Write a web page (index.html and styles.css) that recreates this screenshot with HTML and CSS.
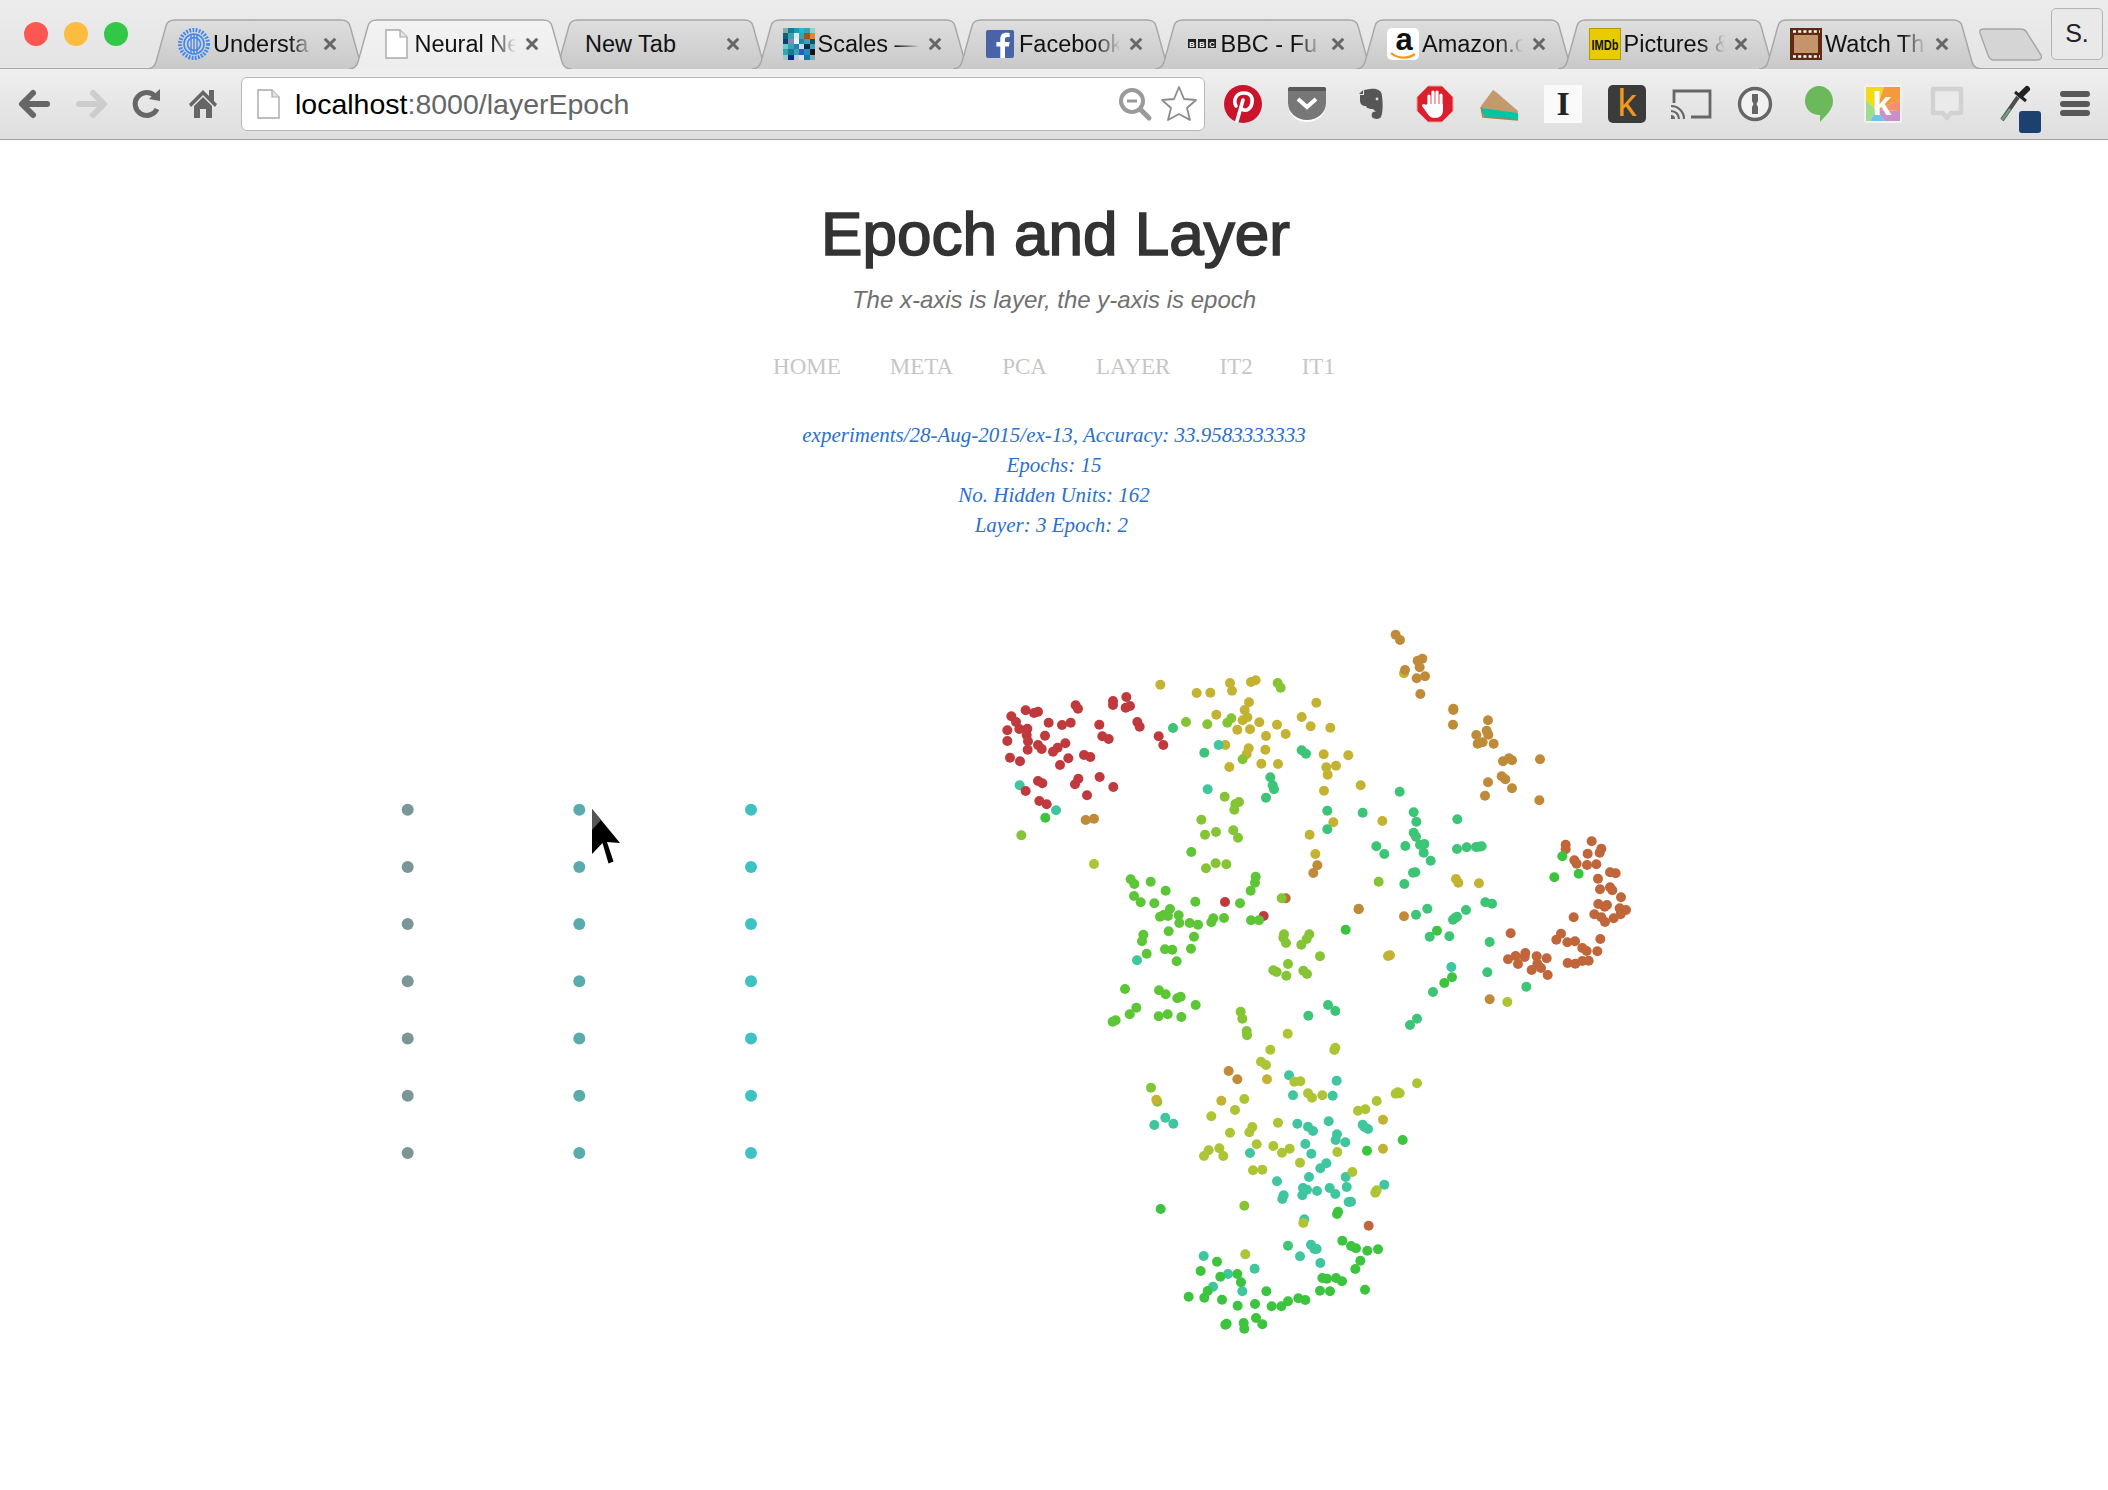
FILE: index.html
```html
<!DOCTYPE html>
<html lang="en">
<head>
    <meta charset="UTF-8">
    <title>Neural Network Visualization</title>
    <link rel="stylesheet" href="styles.css">
</head>
<body>
    <svg class="svg-defs" width="0" height="0">
        <defs>
            <linearGradient id="tabGrad" x1="0" y1="0" x2="0" y2="1">
                <stop offset="0" stop-color="#dedede"/>
                <stop offset="1" stop-color="#c9c9c9"/>
            </linearGradient>
            <linearGradient id="activeGrad" x1="0" y1="0" x2="0" y2="1">
                <stop offset="0" stop-color="#f3f3f3"/>
                <stop offset="1" stop-color="#ededed"/>
            </linearGradient>
            <symbol id="tab-shape" viewBox="0 0 223 50">
                <path stroke="#a6a6a6" stroke-width="1.4" d="M0 50C6 50 8 46 9 43L19 7C20 3 23 1 28 1H194C199 1 202 3 203 7L213 43C214 46 217 50 223 50"/>
            </symbol>
            <symbol id="page" viewBox="0 0 32 32">
                <path fill="#fff" stroke="#a9a9a9" stroke-width="1.4" d="M6 2H20L27 9V30H6Z"/>
                <path fill="#e4e4e4" stroke="#a9a9a9" stroke-width="1.2" d="M20 2V9H27"/>
            </symbol>
            <symbol id="close" viewBox="0 0 16 16">
                <path stroke="#666" stroke-width="3.4" d="M2 2L14 14M14 2L2 14"/>
            </symbol>
        </defs>
    </svg>

    <div class="browser">
        <div class="tabstrip">
            <div class="lights">
                <span class="light light-red"></span>
                <span class="light light-yellow"></span>
                <span class="light light-green"></span>
            </div>
            <div class="tab">
                <svg class="tab-shape"><use href="#tab-shape" fill="url(#tabGrad)"/></svg>
                <svg class="favicon" viewBox="0 0 32 32">
                    <circle cx="16" cy="16" r="14" fill="none" stroke="#3f86ef" stroke-width="4" stroke-dasharray="1.8 1.4"/>
                    <circle cx="16" cy="16" r="10" fill="none" stroke="#3f86ef" stroke-width="1.6"/>
                    <circle cx="16" cy="16" r="6.5" fill="none" stroke="#3f86ef" stroke-width="1.6"/>
                    <path stroke="#3f86ef" stroke-width="1.4" d="M13 7V25M16 6V26M19 7V25"/>
                </svg>
                <span class="tab-title">Understa</span>
                <svg class="tab-close"><use href="#close"/></svg>
            </div>
            <div class="tab tab-active">
                <svg class="tab-shape"><use href="#tab-shape" fill="url(#activeGrad)"/></svg>
                <svg class="favicon"><use href="#page"/></svg>
                <span class="tab-title">Neural Ne</span>
                <svg class="tab-close"><use href="#close"/></svg>
            </div>
            <div class="tab">
                <svg class="tab-shape"><use href="#tab-shape" fill="url(#tabGrad)"/></svg>
                <span class="tab-title no-icon">New Tab</span>
                <svg class="tab-close"><use href="#close"/></svg>
            </div>
            <div class="tab">
                <svg class="tab-shape"><use href="#tab-shape" fill="url(#tabGrad)"/></svg>
                <svg class="favicon" viewBox="0 0 6 6" shape-rendering="crispEdges">
                    <rect width="6" height="6" fill="#3aa3b0"/>
                    <rect x="0" width="1" height="1" fill="#8aa"/><rect x="1" width="1" height="1" fill="#147a9c"/><rect x="2" width="1" height="1" fill="#1f9ab5"/><rect x="3" width="1" height="1" fill="#20b8d0"/><rect x="5" width="1" height="1" fill="#9cc"/>
                    <rect y="1" width="1" height="1" fill="#0d5f7a"/><rect x="2" y="1" width="1" height="1" fill="#dfe8e8"/><rect x="4" y="1" width="1" height="1" fill="#a5541f"/><rect x="5" y="1" width="1" height="1" fill="#e08a2a"/>
                    <rect y="2" width="1" height="1" fill="#0c3f70"/><rect x="1" y="2" width="1" height="1" fill="#88b"/><rect x="2" y="2" width="1" height="1" fill="#eef"/><rect x="3" y="2" width="1" height="1" fill="#1c8aa0"/><rect x="5" y="2" width="1" height="1" fill="#14506a"/>
                    <rect y="3" width="1" height="1" fill="#6cc"/><rect x="2" y="3" width="1" height="1" fill="#2a80b0"/><rect x="3" y="3" width="1" height="1" fill="#bde"/><rect x="4" y="3" width="1" height="1" fill="#0f2a50"/>
                    <rect x="1" y="4" width="1" height="1" fill="#147a9c"/><rect x="3" y="4" width="1" height="1" fill="#2a5fc0"/><rect x="4" y="4" width="1" height="1" fill="#1a8fc0"/><rect x="5" y="4" width="1" height="1" fill="#111"/>
                    <rect y="5" width="1" height="1" fill="#9cc"/><rect x="1" y="5" width="1" height="1" fill="#0c2a80"/><rect x="2" y="5" width="1" height="1" fill="#bcd"/><rect x="3" y="5" width="1" height="1" fill="#dde"/><rect x="4" y="5" width="1" height="1" fill="#147a9c"/><rect x="5" y="5" width="1" height="1" fill="#7ab"/>
                </svg>
                <span class="tab-title">Scales —</span>
                <svg class="tab-close"><use href="#close"/></svg>
            </div>
            <div class="tab">
                <svg class="tab-shape"><use href="#tab-shape" fill="url(#tabGrad)"/></svg>
                <svg class="favicon" viewBox="0 0 32 32">
                    <rect x="2" y="2" width="28" height="28" rx="2" fill="#4a62a8"/>
                    <path fill="#fff" d="M21 30V18.500H25L25.600 14H21V11.200C21 9.800 21.500 9 23.300 9H25.700V5C25.200 4.900 23.800 4.800 22.200 4.800C18.700 4.800 16.300 6.900 16.300 10.700V14H12.400V18.500H16.300V30Z"/>
                </svg>
                <span class="tab-title">Facebook</span>
                <svg class="tab-close"><use href="#close"/></svg>
            </div>
            <div class="tab">
                <svg class="tab-shape"><use href="#tab-shape" fill="url(#tabGrad)"/></svg>
                <svg class="favicon" viewBox="0 0 32 32">
                    <rect x="2" y="11" width="8" height="9" fill="#222"/>
                    <rect x="12" y="11" width="8" height="9" fill="#222"/>
                    <rect x="22" y="11" width="8" height="9" fill="#222"/>
                    <text class="bbc-text" x="6" y="18.500">B</text>
                    <text class="bbc-text" x="16" y="18.500">B</text>
                    <text class="bbc-text" x="26" y="18.500">C</text>
                </svg>
                <span class="tab-title">BBC - Fu</span>
                <svg class="tab-close"><use href="#close"/></svg>
            </div>
            <div class="tab">
                <svg class="tab-shape"><use href="#tab-shape" fill="url(#tabGrad)"/></svg>
                <svg class="favicon" viewBox="0 0 32 32">
                    <rect x="0" y="0" width="32" height="32" rx="5" fill="#fff"/>
                    <text class="amazon-text" x="17" y="22">a</text>
                    <path fill="none" stroke="#f29a18" stroke-width="2.200" d="M4 25C11 31 21 31 28 26"/>
                </svg>
                <span class="tab-title">Amazon.c</span>
                <svg class="tab-close"><use href="#close"/></svg>
            </div>
            <div class="tab">
                <svg class="tab-shape"><use href="#tab-shape" fill="url(#tabGrad)"/></svg>
                <svg class="favicon" viewBox="0 0 32 32">
                    <rect x="0.500" y="0.500" width="31" height="31" fill="#e8cc00" stroke="#b49a00"/>
                    <text class="imdb-text" x="16" y="22" textLength="27" lengthAdjust="spacingAndGlyphs">IMDb</text>
                </svg>
                <span class="tab-title">Pictures &amp;</span>
                <svg class="tab-close"><use href="#close"/></svg>
            </div>
            <div class="tab">
                <svg class="tab-shape"><use href="#tab-shape" fill="url(#tabGrad)"/></svg>
                <svg class="favicon" viewBox="0 0 32 32">
                    <rect width="32" height="32" fill="#5e2a12"/>
                    <rect x="4" y="7" width="24" height="18" fill="#c4946a"/>
                    <path stroke="#fff" stroke-width="2.400" stroke-dasharray="3 2.200" d="M3 3.500H30M3 28.500H30"/>
                </svg>
                <span class="tab-title">Watch Th</span>
                <svg class="tab-close"><use href="#close"/></svg>
            </div>
            <svg class="newtab" viewBox="0 0 64 33">
                <path fill="#d5d5d5" stroke="#a6a6a6" stroke-width="1.400" d="M5 1H41C45 1 47 2 48 5L62 27C63 30 62 32 58 32H15C12 32 10 30 9 27L1 5C0 2 2 1 5 1Z"/>
            </svg>
            <div class="profile">S.</div>
        </div>

        <div class="toolbar">
            <div class="nav-btn">
                <svg viewBox="0 0 44 44"><path class="nav-arrow" d="M34 22H10M20 11L9 22L20 33"/></svg>
            </div>
            <div class="nav-btn">
                <svg viewBox="0 0 44 44"><path class="nav-arrow nav-disabled" d="M10 22H34M24 11L35 22L24 33"/></svg>
            </div>
            <div class="nav-btn">
                <svg viewBox="0 0 44 44">
                    <path class="nav-reload" d="M30 14A11.500 11.500 0 1 0 32 27"/>
                    <path fill="#666" d="M24 17L35 7V19Z"/>
                </svg>
            </div>
            <div class="nav-btn">
                <svg viewBox="0 0 44 44">
                    <path fill="#666" d="M22 8L28 14V8H33V19L36 22L34 25L22 13L10 25L8 22Z"/>
                    <path fill="#666" d="M13 24L22 15L31 24V36H25V27H19V36H13Z"/>
                </svg>
            </div>
            <div class="address">
                <svg class="address-page"><use href="#page"/></svg>
                <div class="url"><span class="url-host">localhost</span>:8000/layerEpoch</div>
                <svg class="address-icon" viewBox="0 0 44 44">
                    <circle cx="19" cy="19" r="11" fill="none" stroke="#9a9a9a" stroke-width="4"/>
                    <path stroke="#9a9a9a" stroke-width="3" d="M14 19H24"/>
                    <path stroke="#9a9a9a" stroke-width="5" stroke-linecap="round" d="M28 28L36 36"/>
                </svg>
                <svg class="address-icon" viewBox="0 0 44 44">
                    <path fill="#fff" stroke="#8c8c8c" stroke-width="1.800" stroke-linejoin="round" d="M22 5L27 17L39 18L30 26L33 38L22 32L11 38L14 26L5 18L17 17Z"/>
                </svg>
            </div>
            <div class="extensions">
                <div class="ext">
                    <svg viewBox="0 0 44 44">
                        <circle cx="22" cy="22" r="19" fill="#c9142c"/>
                        <path fill="none" stroke="#fff" stroke-width="3.600" stroke-linecap="round" d="M15 24C12 18 15 11 23 11C30 11 32 16 31 21C30 27 25 30 21 27M22 18L16 39"/>
                    </svg>
                </div>
                <div class="ext">
                    <svg viewBox="0 0 44 44">
                        <path fill="#fff" d="M3 8H41V22C41 33 32 40 22 40S3 33 3 22Z"/>
                        <path fill="#777" d="M3 7C3 6 4 5 5 5H39C40 5 41 6 41 7V21C41 31 32 38 22 38S3 31 3 21Z"/>
                        <path fill="#585858" d="M3 7C3 6 4 5 5 5H39C40 5 41 6 41 7V9H3Z"/>
                        <path fill="none" stroke="#fff" stroke-width="4" d="M13 17L22 25L31 17"/>
                    </svg>
                </div>
                <div class="ext">
                    <svg viewBox="0 0 44 44">
                        <path fill="#565656" d="M15 8L21 7C27 6 33 8 33 14C34 22 34 30 32 35C30 38 24 37 23 35C22 31 24 29 27 30L24 27C21 27 18 27 17 24C13 24 11 22 11 18V13H15Z"/>
                        <path fill="#565656" d="M10 12L14 8V12Z"/>
                        <circle cx="28" cy="17" r="1.400" fill="#ddd"/>
                    </svg>
                </div>
                <div class="ext">
                    <svg viewBox="0 0 44 44">
                        <path fill="#dd1f2b" stroke="#e9a6a6" stroke-width="1" d="M15 4H29L40 15V29L29 40H15L4 29V15Z"/>
                        <path fill="none" stroke="#fff" stroke-width="3.200" stroke-linecap="round" d="M16 14V25M20 10V24M24 10V24M28 13V25"/>
                        <path fill="#fff" d="M14 22H30V28C30 33 27 36 22 36C18 36 16 34 14 31L9 24C9 22 11 21 13 23Z"/>
                    </svg>
                </div>
                <div class="ext">
                    <svg viewBox="0 0 44 44">
                        <path fill="#c49a6c" d="M4 24L16 8L19 10L41 29L40 32L5 28Z"/>
                        <path fill="#00c5a2" d="M4 26L41 31V38L7 35Z"/>
                        <path fill="none" stroke="#a98156" stroke-width="1.600" d="M4 25L6 35L41 38"/>
                    </svg>
                </div>
                <div class="ext">
                    <svg viewBox="0 0 44 44">
                        <rect x="3" y="3" width="38" height="38" fill="#fafafa"/>
                        <text class="ext-i" x="22" y="33">I</text>
                    </svg>
                </div>
                <div class="ext">
                    <svg viewBox="0 0 44 44">
                        <rect x="3" y="3" width="38" height="38" rx="5" fill="#3b3b3b"/>
                        <text class="ext-k" x="22" y="34">k</text>
                    </svg>
                </div>
                <div class="ext">
                    <svg viewBox="0 0 44 44">
                        <path fill="none" stroke="#666" stroke-width="2.800" d="M5 21V9H41V35H22"/>
                        <path fill="none" stroke="#666" stroke-width="2.200" d="M2 24A13 13 0 0 1 15 37M2 29A8 8 0 0 1 10 37"/>
                        <path fill="#666" d="M2 33A4 4 0 0 1 6 37H2Z"/>
                    </svg>
                </div>
                <div class="ext">
                    <svg viewBox="0 0 44 44">
                        <circle cx="22" cy="22" r="15.500" fill="#f2f2f2" stroke="#666" stroke-width="3.400"/>
                        <path fill="#666" d="M19 12H25V19L23.500 22L25 25V32H19V25L20.500 22L19 19Z"/>
                    </svg>
                </div>
                <div class="ext">
                    <svg viewBox="0 0 44 44">
                        <path fill="#6cb95c" d="M22 4C30 4 36 11 36 19C36 28 29 33 23 40V33C14 33 8 27 8 19C8 11 14 4 22 4Z"/>
                    </svg>
                </div>
                <div class="ext">
                    <svg viewBox="0 0 44 44">
                        <rect x="3" y="3" width="38" height="38" rx="3" fill="#f2f2f2"/>
                        <path fill="#f4da10" d="M5 5H23L15 28L5 18Z"/>
                        <path fill="#f49a3c" d="M23 5H39V18L15 28Z"/>
                        <path fill="#f48f72" d="M39 18V29L15 28Z"/>
                        <path fill="#c98fc9" d="M39 29V39H24L15 28Z"/>
                        <path fill="#6dc3e8" d="M24 39H9L15 28Z"/>
                        <path fill="#9fdc8c" d="M9 39H5V18L15 28Z"/>
                        <text class="ext-kato" x="21" y="33">k</text>
                    </svg>
                </div>
                <div class="ext">
                    <svg viewBox="0 0 44 44">
                        <path fill="#eaeaea" stroke="#d2d2d2" stroke-width="4.500" stroke-linejoin="round" d="M8 7H36V31H26L22 36L18 31H8Z"/>
                    </svg>
                </div>
                <div class="ext">
                    <svg class="dropper" viewBox="0 0 44 44">
                        <path stroke="#4f4f4f" stroke-width="4" d="M13 38L29 15"/>
                        <path stroke="#6fa47e" stroke-width="2.400" d="M13 38L21 27"/>
                        <path stroke="#222" stroke-width="6" stroke-linecap="round" d="M32 13L38 7"/>
                        <path stroke="#222" stroke-width="3" d="M26 10L37 19"/>
                        <rect x="30" y="29" width="22" height="22" rx="3" fill="#1c416f"/>
                    </svg>
                </div>
                <div class="ext">
                    <svg viewBox="0 0 44 44">
                        <path stroke="#585858" stroke-width="6" stroke-linecap="round" d="M10 12H34M10 22H34M10 31H34"/>
                    </svg>
                </div>
            </div>
        </div>
    </div>

    <div class="header">
        <h1>Epoch and Layer</h1>
        <p class="subtitle">The x-axis is layer, the y-axis is epoch</p>
        <div class="menu">
            <a>HOME</a>
            <a>META</a>
            <a>PCA</a>
            <a>LAYER</a>
            <a>IT2</a>
            <a>IT1</a>
        </div>
        <div class="info">
            <div>experiments/28-Aug-2015/ex-13, Accuracy: 33.9583333333</div>
            <div>Epochs: 15</div>
            <div>No. Hidden Units: 162</div>
            <div>Layer: 3 Epoch: 2&nbsp;</div>
        </div>
    </div>

    <svg id="plot" class="plot" viewBox="0 540 2108 950">
        <g id="points"></g>
        <path class="cursor" d="M592 809L620 843L607 842L613.500 861.500L608.500 863.500L602.500 843L592 854Z"/>
        <path class="cursor-shine" d="M592 809L601 820L592 830Z"/>
    </svg>

    <script src="plot.js"></script>
</body>
</html>
```

FILE: styles.css
```css
html, body {
    margin: 0;
    padding: 0;
    background: white;
}
body {
    font-family: "Liberation Sans", Arial, sans-serif;
    overflow: hidden;
}
.svg-defs {
    position: absolute;
}

/* browser window */
.tabstrip {
    display: flex;
    height: 49px;
    padding-top: 19px;
    background: linear-gradient(#ececec, #e4e4e4);
    border-bottom: 1px solid #a9a9a9;
}
.lights {
    display: flex;
    gap: 16px;
    width: 123px;
    height: 24px;
    margin-top: 3px;
    padding-left: 24px;
}
.light {
    width: 24px;
    height: 24px;
    border-radius: 50%;
}
.light-red {
    background: #fc5753;
}
.light-yellow {
    background: #fdbc40;
}
.light-green {
    background: #33c748;
}
.tab {
    position: relative;
    display: flex;
    flex: none;
    align-items: center;
    box-sizing: border-box;
    width: 223px;
    height: 50px;
    margin-right: -21.5px;
    padding: 0 33px 0 31px;
}
.tab-active {
    z-index: 2;
}
.tab-shape {
    position: absolute;
    left: 0;
    top: 0;
    width: 223px;
    height: 50px;
}
.favicon {
    position: relative;
    flex: none;
    width: 32px;
    height: 32px;
    margin-right: 3px;
}
.tab-title {
    position: relative;
    flex: 1;
    overflow: hidden;
    margin-right: 9px;
    font-size: 23.5px;
    color: #111;
    white-space: nowrap;
    -webkit-mask-image: linear-gradient(to right, black 76%, transparent 100%);
    mask-image: linear-gradient(to right, black 76%, transparent 100%);
}
.no-icon {
    margin-left: 4px;
    -webkit-mask-image: none;
    mask-image: none;
}
.tab-close {
    position: relative;
    flex: none;
    width: 14px;
    height: 14px;
}
.bbc-text {
    font: bold 7.5px "Liberation Sans", sans-serif;
    fill: white;
    text-anchor: middle;
}
.amazon-text {
    font: bold 31px "Liberation Sans", sans-serif;
    fill: #111;
    text-anchor: middle;
}
.imdb-text {
    font: bold 15px "Liberation Sans", sans-serif;
    fill: #111;
    text-anchor: middle;
}
.newtab {
    flex: none;
    width: 64px;
    height: 33px;
    margin: 9px 0 0 18.500px;
}
.profile {
    flex: none;
    box-sizing: border-box;
    width: 52px;
    height: 52px;
    margin: -11px 0 0 8px;
    border: 1px solid #b4b4b4;
    border-radius: 5px;
    background: #e9e9e9;
    font-size: 25px;
    line-height: 48px;
    text-align: center;
    color: #222;
}

.toolbar {
    display: flex;
    align-items: center;
    box-sizing: border-box;
    height: 71px;
    padding-left: 7px;
    background: linear-gradient(#efefef, #dedede);
    border-bottom: 1px solid #a0a0a0;
}
.nav-btn {
    display: flex;
    flex: none;
    justify-content: center;
    width: 56px;
}
.nav-btn svg {
    width: 44px;
    height: 44px;
}
.nav-arrow {
    fill: none;
    stroke: #666;
    stroke-width: 6;
    stroke-linecap: round;
    stroke-linejoin: round;
}
.nav-disabled {
    stroke: #cdcdcd;
}
.nav-reload {
    fill: none;
    stroke: #666;
    stroke-width: 5;
}
.address {
    display: flex;
    flex: none;
    align-items: center;
    box-sizing: border-box;
    width: 964px;
    height: 54px;
    margin-left: 10px;
    padding: 0 3px 0 10px;
    background: white;
    border: 1px solid #b9b9b9;
    border-radius: 6px;
}
.address-page {
    flex: none;
    width: 32px;
    height: 32px;
}
.url {
    flex: 1;
    margin-left: 11px;
    font-size: 28.5px;
    color: #666;
}
.url-host {
    color: #000;
}
.address-icon {
    flex: none;
    width: 44px;
    height: 44px;
}
.extensions {
    display: flex;
    margin-left: 6px;
}
.ext {
    display: flex;
    flex: none;
    justify-content: center;
    width: 64px;
}
.ext svg {
    width: 44px;
    height: 44px;
}
.dropper {
    overflow: visible;
}
.ext-i {
    font: bold 34px "Liberation Serif", serif;
    fill: #222;
    text-anchor: middle;
}
.ext-k {
    font: 38px "Liberation Sans", sans-serif;
    fill: #f19a1a;
    text-anchor: middle;
}
.ext-kato {
    font: bold 34px "Liberation Sans", sans-serif;
    fill: white;
    text-anchor: middle;
}

/* page */
.header {
    text-align: center;
}
h1 {
    margin: 0;
    padding: 59px 0 0 3px;
    font-size: 62px;
    font-weight: normal;
    line-height: 70px;
    color: #333;
    -webkit-text-stroke: 1.7px #333;
}
.subtitle {
    margin: 16px 0 0;
    font-size: 24px;
    font-style: italic;
    line-height: 30px;
    color: #707070;
}
.menu {
    display: flex;
    justify-content: center;
    gap: 49px;
    margin-top: 38px;
    font-family: "Liberation Serif", "Times New Roman", serif;
    font-size: 23px;
    line-height: 28px;
    color: #c6c6c6;
}
.info {
    margin-top: 39px;
    font-family: "Liberation Serif", "Times New Roman", serif;
    font-size: 21px;
    font-style: italic;
    line-height: 30px;
    color: #2a70cf;
}
.plot {
    display: block;
    width: 2108px;
    height: 950px;
}
.cursor {
    fill: #000;
}
.cursor-shine {
    fill: #555;
}

/* dots */
.grid-a { fill: #7a9696; }
.grid-b { fill: #5aacac; }
.grid-c { fill: #40c2c2; }
.red { fill: #c0393d; }
.rust { fill: #c0663a; }
.tan { fill: #c08b38; }
.olive { fill: #c4b333; }
.citron { fill: #adc435; }
.lime { fill: #85c535; }
.green { fill: #5cc637; }
.bright { fill: #3cc43f; }
.mint { fill: #3dc577; }
.teal { fill: #3fc6a0; }
```

FILE: plot.js
```js
// layer / epoch grid on the left
var svgNS = "http://www.w3.org/2000/svg";
var points = document.getElementById("points");

function dot(x, y, r, cls) {
    var c = document.createElementNS(svgNS, "circle");
    c.setAttribute("cx", x);
    c.setAttribute("cy", y);
    c.setAttribute("r", r);
    c.setAttribute("class", cls);
    points.appendChild(c);
}

var gridX = [407.7, 579.3, 751];
var gridCls = ["grid-a", "grid-b", "grid-c"];
for (var i = 0; i < 3; i++) {
    for (var j = 0; j < 7; j++) {
        dot(gridX[i], 809.7 + j * 57.2, 6, gridCls[i]);
    }
}

// t-SNE points, stored per tile as 3x offsets from the tile origin
var tiles = [
    { x: 980, y: 610, series: [
        ["olive", "541,224 650,249 691,248 750,219 756,242 813,216 827,211 807,277 794,300 709,314 788,331 802,322 838,337 772,359 810,358 891,344 858,378 917,372 965,321 992,349 1009,278 736,405 806,415 800,432 856,419"],
        ["lime", "893,219 902,233 618,336 682,343 742,338 754,325 788,448 124,676"],
        ["mint", "579,354 673,428 965,421 978,431"],
        ["teal", "716,405 119,526 228,601"],
        ["bright", "196,623"],
        ["tan", "317,630 342,626"],
        ["citron", "342,762"],
        ["red", "137,301 162,309 174,305 94,319 108,336 118,357 142,356 82,361 140,375 82,393 144,394 143,419 90,443 120,454 174,405 185,417 195,377 206,338 246,345 272,338 287,286 294,296 399,273 399,285 439,261 437,293 450,288 358,344 472,336 479,350 367,379 386,387 536,379 550,405 256,400 233,413 219,425 265,445 240,465 312,435 331,441 295,506 285,523 359,501 174,513 187,520 137,543 321,556 178,573 200,583"]
    ]},
    { x: 1320, y: 610, series: [
        ["olive", "252,190 31,353 11,433 85,436"],
        ["tan", "227,74 240,90 293,152 307,146 299,172 255,180 290,205 315,199 301,252 400,296 400,300 399,344 504,331 500,362 505,374 469,375 473,401 488,397 521,401 549,454 567,445 576,451 660,448 545,499 556,508"]
    ]},
    { x: 1100, y: 760, series: [
        ["rust", "557,415"],
        ["red", "40,81 375,426 491,468"],
        ["olive", "388,21 484,11 534,12 679,22 708,17 683,44 672,92 782,76 847,183 700,187 629,224 646,282 864,588 870,586"],
        ["tan", "652,316 640,339 776,446 776,448 912,469"],
        ["teal", "323,88 111,601"],
        ["mint", "511,52 518,76 522,88 498,113 899,95 682,152 788,158 682,208 941,157 949,185 941,218 948,230 829,259 853,282 916,258 960,254 973,252 971,278 992,302 939,338 946,337 913,372 982,446 948,464 989,530 999,696 951,776 930,795 684,735 706,753 625,767"],
        ["lime", "374,110 417,126 406,132 403,149 304,179 315,224 348,216 400,211 414,233 318,325 347,310 379,313 836,365 545,415 552,523 550,533 558,549 628,523 620,537 604,554 660,589 564,612 520,631 530,636 559,647 610,632 621,642 422,755 427,776 440,813 441,826"],
        ["green", "274,276 92,358 103,372 152,365 197,392 102,408 122,427 163,430 286,425 467,350 465,368 452,392 420,430 210,447 180,470 192,464 204,468 236,466 238,489 269,489 294,494 340,475 334,487 372,474 453,481 477,481 206,514 130,524 126,544 282,530 140,581 195,568 217,569 273,566 230,604 75,687 177,691 197,703 232,715 242,710 287,735 109,743 89,763 38,785 47,781 176,769 203,763 244,771"],
        ["bright", "737,509 1011,512"],
        ["citron", "563,821 511,869 706,863 703,870"]
    ]},
    { x: 1360, y: 780, series: [
        ["tan", "375,47 456,25 538,61 384,7 389,658"],
        ["mint", "292,118 291,207 320,202 348,201 358,200 365,199 318,390 291,410 285,414 279,419 376,367 396,371 268,469 389,486 382,577 499,620"],
        ["teal", "274,561"],
        ["olive", "288,297 295,308 357,310"],
        ["citron", "442,666"],
        ["rust", "617,194 617,208 695,184 724,206 719,218 683,221 643,241 650,251 681,255 709,253 750,277 767,280 714,296 720,328 750,322 757,331 783,352 715,372 741,375 734,380 779,385 798,390 782,403 703,403 724,412 735,426 761,415 641,412 721,477 603,461 589,479 622,487 645,484 452,460 667,504 680,513 712,514 623,549 646,551 667,543 686,542 496,519 494,531 467,528 444,538 474,552 530,529 560,535 532,551 543,564 515,570 563,585"],
        ["bright", "607,229 583,292 656,281 253,609 276,592"]
    ]},
    { x: 1100, y: 1040, series: [
        ["lime", "153,143 172,185 433,497"],
        ["olive", "169,179 364,182 501,118 849,239 849,326"],
        ["tan", "386,93 412,118"],
        ["teal", "196,233 163,255 220,251 567,106 710,122 579,166 698,167 592,251 624,260 639,273 686,244 711,283 707,300 736,307 616,312 634,341 450,339 679,370 661,385 627,411 737,411 531,424 740,441 853,434 609,444 621,449 651,453 689,444 706,462 607,466 551,466 547,477 746,486 753,485 613,538 788,254 793,261 804,267 311,648 384,702 464,686 339,740 427,754 600,649 661,669 633,614 643,627 650,627"],
        ["mint", "564,617"],
        ["citron", "483,65 498,75 433,177 405,210 334,229 457,261 448,277 390,278 470,313 520,318 569,326 546,338 326,331 312,348 358,325 370,348 600,368 459,391 487,389 583,125 601,124 624,160 636,173 667,166 774,212 796,208 830,183 887,161 899,160 893,157 951,130 534,248 712,336 757,396 830,451 826,458 610,549 436,643"],
        ["rust", "806,557"],
        ["bright", "714,515 711,522 908,300 801,332 182,507 727,602 753,618 768,625 802,632 834,628 781,662 766,687 351,665 302,693 361,710 412,702 423,727 323,753 266,770 313,773 366,779 413,797 465,792 499,754 515,799 544,799 564,784 595,775 616,780 660,752 690,754 667,714 681,716 708,714 726,724 795,749 380,851 376,854 431,849 433,866 468,834 487,853"]
    ]}
];

tiles.forEach(function (tile) {
    tile.series.forEach(function (s) {
        s[1].split(" ").forEach(function (p) {
            var xy = p.split(",");
            dot(tile.x + xy[0] / 3, tile.y + xy[1] / 3, 5, s[0]);
        });
    });
});
```
